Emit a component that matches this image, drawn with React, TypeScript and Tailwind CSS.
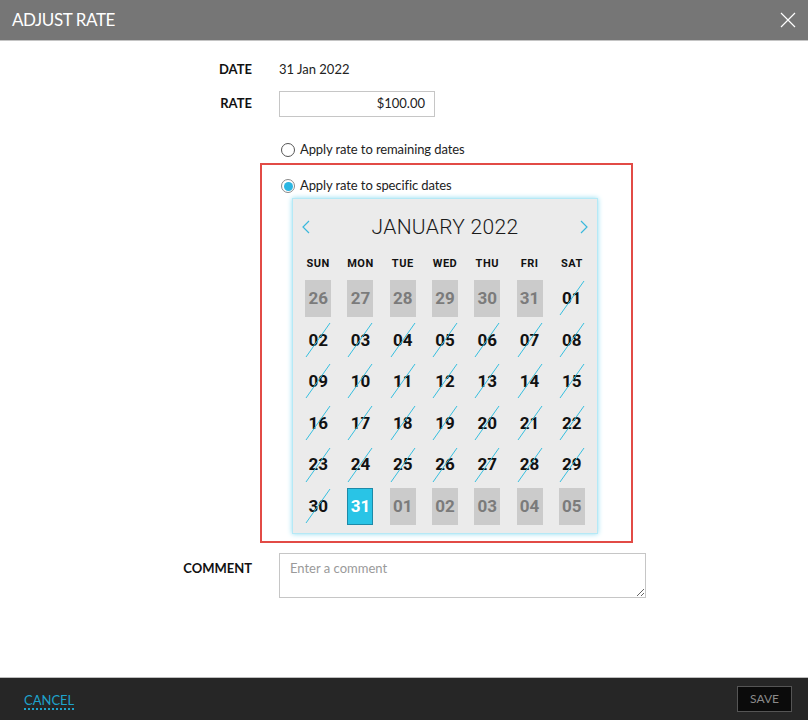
import React from "react";

type Cell = { n: number; kind: "out" | "in" | "sel" };

const days = ["SUN", "MON", "TUE", "WED", "THU", "FRI", "SAT"];

const cells: Cell[] = [
  ...[26, 27, 28, 29, 30, 31].map((n) => ({ n, kind: "out" as const })),
  ...Array.from({ length: 30 }, (_, i) => ({ n: i + 1, kind: "in" as const })),
  { n: 31, kind: "sel" },
  ...[1, 2, 3, 4, 5].map((n) => ({ n, kind: "out" as const })),
];

const pad = (n: number) => String(n).padStart(2, "0");

function DayCell({ cell }: { cell: Cell }) {
  const base =
    "relative w-[26px] h-[37px] flex items-center justify-center text-[17px] font-bold";
  if (cell.kind === "out") {
    return <div className={`${base} bg-[#cbcbcb] text-[#7b7b7b]`}>{pad(cell.n)}</div>;
  }
  if (cell.kind === "sel") {
    return (
      <div className={`${base} bg-[#29c4e6] text-white border border-[#1d8aa8]`}>
        {pad(cell.n)}
      </div>
    );
  }
  return (
    <div className={`${base} text-[#111]`}>
      {pad(cell.n)}
      <svg className="absolute inset-0" width="26" height="37" viewBox="0 0 26 37">
        <line x1="1" y1="35" x2="25" y2="1" stroke="#35bfdf" strokeWidth="1" />
      </svg>
    </div>
  );
}

function Calendar() {
  return (
    <div className="ml-[30px] mt-[5px] w-[306px] h-[336px] bg-[#ebebeb] border border-[#b5e9f6] shadow-[0_0_5px_#8fdcf0] font-['Roboto',sans-serif]">
      <div className="flex justify-between px-[9px] pt-[14px] h-[55px] items-start">
        <svg width="8" height="14" viewBox="0 0 8 14" className="mt-[7px]">
          <polyline points="7,1 1,7 7,13" fill="none" stroke="#3ab8dc" strokeWidth="1.2" />
        </svg>
        <div className="text-[21px] leading-[28px] font-light text-[#1a1a1a] tracking-[0.3px]">JANUARY 2022</div>
        <svg width="8" height="14" viewBox="0 0 8 14" className="mt-[7px]">
          <polyline points="1,1 7,7 1,13" fill="none" stroke="#3ab8dc" strokeWidth="1.2" />
        </svg>
      </div>
      <div className="grid grid-cols-7 px-[4px]">
        {days.map((d) => (
          <div key={d} className="h-[20px] flex items-center justify-center text-[11px] font-bold text-[#111] tracking-[0.5px]">
            {d}
          </div>
        ))}
      </div>
      <div className="grid grid-cols-7 px-[4px] mt-[4px]">
        {cells.map((c, i) => (
          <div key={i} className="h-[41.6px] flex items-center justify-center">
            <DayCell cell={c} />
          </div>
        ))}
      </div>
    </div>
  );
}

function Radio({ checked }: { checked?: boolean }) {
  return (
    <span
      className={`w-[14px] h-[14px] rounded-full border flex items-center justify-center bg-white ${
        checked ? "border-[#8a8a8a]" : "border-[#555] border-[1.5px]"
      }`}
    >
      {checked && <span className="w-[9px] h-[9px] rounded-full bg-[#2bb6e2]" />}
    </span>
  );
}

export default function App() {
  return (
    <div className="w-[808px] h-[720px] bg-white flex flex-col font-['Lato',sans-serif] text-[13px] text-[#222]">
      {/* Header */}
      <div className="h-[41px] bg-[#767676] border-b border-[#c4c4c4] flex items-center justify-between pl-[12px] pr-[12px]">
        <span className="text-white text-[17px] tracking-[-0.4px]">ADJUST RATE</span>
        <svg width="16" height="16" viewBox="0 0 16 16">
          <path d="M1 1 L15 15 M15 1 L1 15" stroke="#fff" strokeWidth="1.2" />
        </svg>
      </div>

      {/* Body */}
      <div className="flex-1 flex flex-col">
        <div className="flex items-center h-[20px] mt-[19px]">
          <div className="w-[252px] text-right font-bold text-[#111]">DATE</div>
          <div className="ml-[27px]">31 Jan 2022</div>
        </div>
        <div className="flex items-center mt-[11px]">
          <div className="w-[252px] text-right font-bold text-[#111]">RATE</div>
          <div className="ml-[27px] w-[156px] h-[26px] border border-[#c6c6c6] flex items-center justify-end pr-[9px]">
            $100.00
          </div>
        </div>
        <div className="flex items-center ml-[281px] mt-[26px] h-[14px]">
          <Radio />
          <span className="ml-[5px] tracking-[-0.1px]">Apply rate to remaining dates</span>
        </div>
        <div className="ml-[260px] mt-[6px] w-[373px] h-[380px] border-2 border-[#e24b46]">
          <div className="flex items-center ml-[19px] mt-[14px] h-[14px]">
            <Radio checked />
            <span className="ml-[5px] tracking-[-0.1px]">Apply rate to specific dates</span>
          </div>
          <Calendar />
        </div>
        <div className="flex mt-[10px]">
          <div className="w-[252px] text-right font-bold text-[#111] mt-[6px]">COMMENT</div>
          <textarea
            placeholder="Enter a comment"
            className="ml-[27px] w-[367px] h-[45px] border border-[#c6c6c6] px-[10px] py-[5px] text-[13px] placeholder:text-[#9a9a9a] outline-none"
          />
        </div>
      </div>

      {/* Footer */}
      <div className="h-[43px] bg-[#262626] border-t border-[#bdbdbd] flex items-center justify-between pl-[24px] pr-[16px]">
        <span className="text-[#1ea3cc] text-[13px] border-b-2 border-dotted border-[#1ea3cc] leading-[15px] mt-[4px]">
          CANCEL
        </span>
        <div className="w-[55px] h-[26px] bg-[#0b0b0b] border border-[#555] flex items-center justify-center text-[12px] text-[#8a8a8a]">
          SAVE
        </div>
      </div>
    </div>
  );
}
